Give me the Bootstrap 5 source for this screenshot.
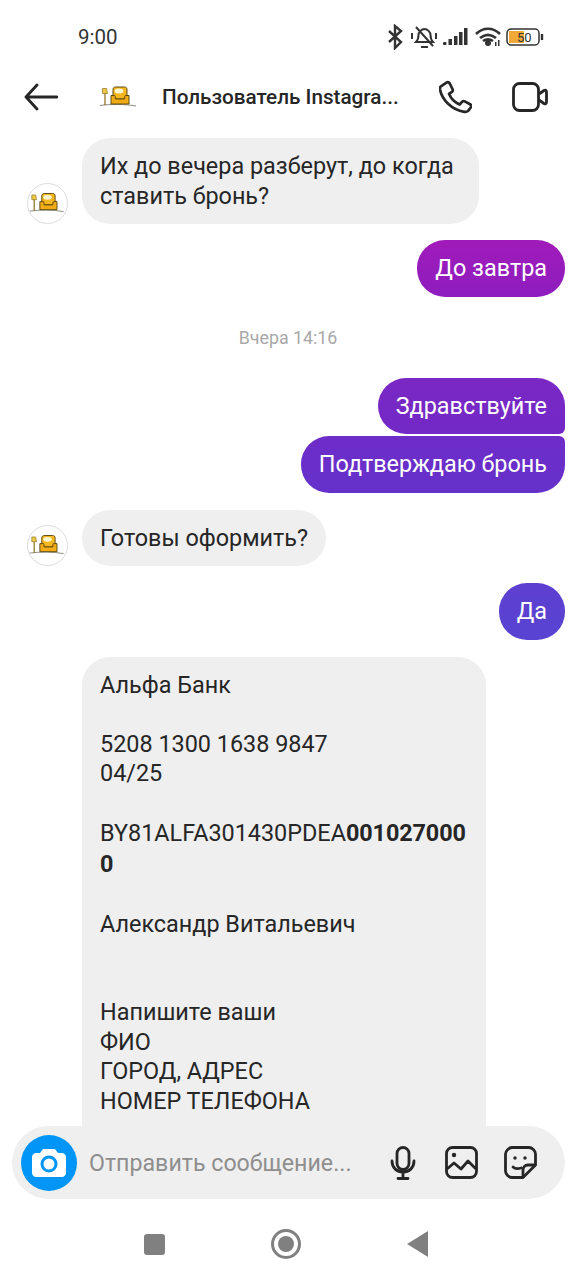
<!DOCTYPE html>
<html lang="en">
<head>
    <meta charset="UTF-8">
    <meta name="viewport" content="width=device-width, initial-scale=1.0">
    <title>Чат</title>
    <link href="https://cdn.jsdelivr.net/npm/bootstrap@5.3.0/dist/css/bootstrap.min.css" rel="stylesheet">
    <style>
        body { font-family: Roboto, "Noto Sans", sans-serif; background: #fff; color: #262626; }
        .phone { width: 576px; height: 1280px; overflow: hidden; position: relative; }
        .statusbar { height: 72px; padding: 25px 32px 0 78px; font-size: 20.5px; line-height: 24px; color: #333; }
        .statusbar svg { margin-top: -1px; }
        .topbar { height: 50px; padding: 0 28px 0 24px; }
        .head-chair { margin-left: 42px; flex: none; }
        .chat-name { font-size: 20.7px; font-weight: 500; line-height: 50px; width: 240px; margin-left: 26px; white-space: nowrap; color: #262626; flex: none; }
        .head-phone { margin-left: 37px; flex: none; }
        .head-video { margin-left: 40px; flex: none; }
        .thread { padding: 16px 11px 0 27px; height: 1038px; overflow: hidden; }
        .msg-row { margin-bottom: 17px; }
        .msg-row.first { margin-bottom: 16px; }
        .msg-row.tight { margin-bottom: 2px; }
        .face { width: 41px; height: 41px; border: 1px solid #dbdbdb; border-radius: 50%; flex: none; margin-right: 14px; }
        .bubble { font-size: 23.4px; line-height: 29.5px; padding: 14px 18px 13px; border-radius: 28px; }
        .bubble-in { background: #efefef; color: #262626; }
        .bubble-out { color: #fff; }
        .bubble-wide { width: 397px; }
        .g1 { background: linear-gradient(180deg, #a01bb9, #8e1dbf); }
        .g2 { background: linear-gradient(180deg, #7a28c4, #7229c6); border-bottom-right-radius: 6px; }
        .g3 { background: linear-gradient(180deg, #6e2cc8, #6531cb); border-top-right-radius: 6px; }
        .g4 { background: linear-gradient(180deg, #5e3fd0, #5844d2); }
        .stamp { font-size: 17.8px; line-height: 20px; color: #a8a8a8; text-align: center; margin: 31px 16px 30px 0; }
        .long-bubble { width: 404px; margin-left: 55px; height: 600px; word-break: break-all; }
        .long-bubble b { line-height: 31px; letter-spacing: -.1px; }
        .composer { position: absolute; left: 12px; top: 1126px; width: 553px; height: 73px; background: #efefef; border-radius: 37px; padding: 0 28px 0 9px; }
        .camera { width: 56px; height: 56px; border-radius: 50%; background: #0095f6; flex: none; }
        .hint-text { font-size: 23.2px; color: #8e8e8e; margin-left: 12px; padding-top: 2px; width: 301px; white-space: nowrap; flex: none; }
        .tool-image { margin-left: 29px; flex: none; }
        .tool-sticker { margin-left: 26px; flex: none; }
        .navkeys { position: absolute; left: 144px; top: 1227px; width: 284px; height: 34px; }
        .key-square { width: 21px; height: 21px; background: #808080; border-radius: 3px; }
        .key-round { width: 30px; height: 30px; border: 3px solid #808080; border-radius: 50%; padding: 4px; }
        .key-round span { display: block; width: 16px; height: 16px; background: #808080; border-radius: 50%; }
        .key-back { width: 0; height: 0; border-style: solid; border-width: 13px 21px 13px 0; border-color: transparent #808080 transparent transparent; }
    </style>
</head>
<body>
    <svg width="0" height="0" class="position-absolute">
        <defs>
            <symbol id="chair" viewBox="0 0 36 22">
                <path d="M0 19.500c10-1.500 25-1.500 36 .5" fill="none" stroke="#8a8a80" stroke-width="1"/>
                <path d="M5 7v12" stroke="#8a6a10" stroke-width="1.200"/>
                <path d="M2.500 2.500h4l1 5h-5z" fill="#f0c848" stroke="#8a7420" stroke-width=".7"/>
                <path d="M13 13V3.500C13 2 14 1 15.500 1h9C26 1 27 2 27 3.500V13z" fill="#f5b71f" stroke="#5f4a12" stroke-width="1"/>
                <ellipse cx="19" cy="5" rx="4.500" ry="2.500" fill="#fff6d2"/>
                <path d="M11 9.500h3.500c.5 0 .8.4.8 1V13h9.400v-2.500c0-.6.3-1 .8-1H29V18H11z" fill="#f2ad16" stroke="#5f4a12" stroke-width="1"/>
            </symbol>
        </defs>
    </svg>
    <div class="phone">
        <div class="statusbar d-flex justify-content-between">
            <span>9:00</span>
            <svg width="156" height="26" viewBox="0 0 156 26" fill="none" stroke="#333" stroke-width="2.400">
                <path d="M1 7l12 11-6 6V2l6 5L1 18"/>
                <path d="M28 18c2-2 2.500-4 2.500-7 0-3 3-6 6-6s6 3 6 6c0 3 .5 5 2.500 7z M33 23h7 M28 3l17 19" stroke-width="2"/>
                <path d="M24 9v6 M48 9v6" stroke-width="2"/>
                <g stroke="none" fill="#333">
                    <rect x="55" y="18" width="3.500" height="3" rx="1"/><rect x="60.500" y="15" width="3.500" height="6"/><rect x="66" y="12" width="3.500" height="9"/><rect x="71" y="8" width="3.500" height="13"/><rect x="76" y="4" width="3.500" height="17"/>
                    <circle cx="100" cy="19" r="3"/><rect x="107" y="18" width="1.500" height="4"/><rect x="110" y="16" width="1.500" height="6"/>
                </g>
                <path d="M88 10c7-7 17-7 24 0 M92 14c5-4 11-4 16 0 M95 17c3-2 7-2 10 0" stroke-width="2.600"/>
                <rect x="119" y="5" width="32" height="16" rx="4" stroke-width="1.500"/>
                <rect x="121" y="7" width="15" height="12" fill="#f0a838" stroke="none"/>
                <path d="M154 10v6"/>
                <text x="129" y="18" font-size="13" font-family="Roboto" fill="#333" stroke="none">50</text>
            </svg>
        </div>
        <div class="topbar d-flex align-items-center">
            <svg width="34" height="28" viewBox="0 0 34 28" fill="none" stroke="#262626" stroke-width="2.800" stroke-linecap="round" stroke-linejoin="round">
                <path d="M33 14H2 M13 2L2 14l11 12"/>
            </svg>
            <svg class="head-chair" width="36" height="22"><use href="#chair"/></svg>
            <div class="chat-name">Пользователь Instagra...</div>
            <svg class="head-phone" width="33" height="34" viewBox="0 0 34 34" fill="none" stroke="#262626" stroke-width="2.800" stroke-linejoin="round">
                <path d="M2 6l6-4c1-.6 2-.4 3 1l3 6c.4 1 .2 2-.7 2.700l-3 2c2 5 6 9 11 11l2.400-2.700c.8-.8 1.800-1 2.800-.5l5.500 3c1.300.8 1.500 1.800 1 2.800l-3 4c-1 1-2 1.400-4 1C13 30 3 20 1 9c-.2-1.300.2-2.300 1-3z"/>
            </svg>
            <svg class="head-video" width="36" height="30" viewBox="0 0 36 30" fill="none" stroke="#262626" stroke-width="2.800" stroke-linejoin="round">
                <rect x="1.500" y="1.500" width="25" height="27" rx="6"/>
                <path d="M27 12l5-3.500c1.300-.8 2.500-.2 2.500 1.500v10c0 1.700-1.200 2.300-2.500 1.500L27 18"/>
            </svg>
        </div>
        <div class="thread">
            <div class="msg-row first d-flex align-items-end">
                <svg class="face" viewBox="0 0 41 41"><use href="#chair" x="1" y="9" width="37" height="22"/></svg>
                <div class="bubble bubble-in bubble-wide">Их до вечера разберут, до когда<br>ставить бронь?</div>
            </div>
            <div class="msg-row d-flex justify-content-end">
                <div class="bubble bubble-out g1">До завтра</div>
            </div>
            <div class="stamp">Вчера 14:16</div>
            <div class="msg-row tight d-flex justify-content-end">
                <div class="bubble bubble-out g2">Здравствуйте</div>
            </div>
            <div class="msg-row d-flex justify-content-end">
                <div class="bubble bubble-out g3">Подтверждаю бронь</div>
            </div>
            <div class="msg-row d-flex align-items-end">
                <svg class="face" viewBox="0 0 41 41"><use href="#chair" x="1" y="9" width="37" height="22"/></svg>
                <div class="bubble bubble-in">Готовы оформить?</div>
            </div>
            <div class="msg-row d-flex justify-content-end">
                <div class="bubble bubble-out g4">Да</div>
            </div>
            <div class="bubble bubble-in long-bubble">
                Альфа Банк<br><br>
                5208 1300 1638 9847<br>
                04/25<br><br>
                BY81ALFA301430PDEA<b>0010270000</b><br><br>
                Александр Витальевич<br><br><br>
                Напишите ваши<br>
                ФИО<br>
                ГОРОД, АДРЕС<br>
                НОМЕР ТЕЛЕФОНА
            </div>
        </div>
        <div class="composer d-flex align-items-center">
            <div class="camera d-flex align-items-center justify-content-center">
                <svg width="34" height="30" viewBox="0 0 34 30">
                    <path fill="#fff" d="M11 1h12l3 4h4c2 0 4 2 4 4v16c0 2-2 4-4 4H4c-2 0-4-2-4-4V9c0-2 2-4 4-4h4z"/>
                    <circle cx="17" cy="16" r="7" fill="none" stroke="#0095f6" stroke-width="3"/>
                </svg>
            </div>
            <div class="hint-text">Отправить сообщение...</div>
            <svg class="flex-none" width="26" height="34" viewBox="0 0 26 34" fill="none" stroke="#262626" stroke-width="2.800" stroke-linecap="round">
                <rect x="7" y="1.500" width="12" height="22" rx="6"/>
                <path d="M2 15c0 7 5 11 11 11s11-4 11-11 M13 26v6 M8 32.500h10"/>
            </svg>
            <svg class="tool-image" width="33" height="33" viewBox="0 0 33 33" fill="none" stroke="#262626" stroke-width="2.800" stroke-linejoin="round">
                <rect x="1.500" y="1.500" width="30" height="30" rx="6"/>
                <circle cx="9" cy="9" r="2.200" fill="#262626" stroke="none"/>
                <path d="M2 23l7-6 7 6 7-8 8 8"/>
            </svg>
            <svg class="tool-sticker" width="33" height="33" viewBox="0 0 33 33" fill="none" stroke="#262626" stroke-width="2.800" stroke-linejoin="round" stroke-linecap="round">
                <path d="M8 1.500h17c3 0 6.500 3 6.500 6.500V19L19 31.500H8c-3 0-6.500-3-6.500-6.500V8c0-3 3.500-6.500 6.500-6.500z"/>
                <path d="M31 19h-7c-3 0-5 2-5 5v7"/>
                <path d="M9 21c2 2 5 2 8 1"/>
                <circle cx="11" cy="12" r="1.700" fill="#262626" stroke="none"/>
                <circle cx="21" cy="12" r="1.700" fill="#262626" stroke="none"/>
            </svg>
        </div>
        <div class="navkeys d-flex align-items-center justify-content-between">
            <div class="key-square"></div>
            <div class="key-round"><span></span></div>
            <div class="key-back"></div>
        </div>
    </div>
</body>
</html>
